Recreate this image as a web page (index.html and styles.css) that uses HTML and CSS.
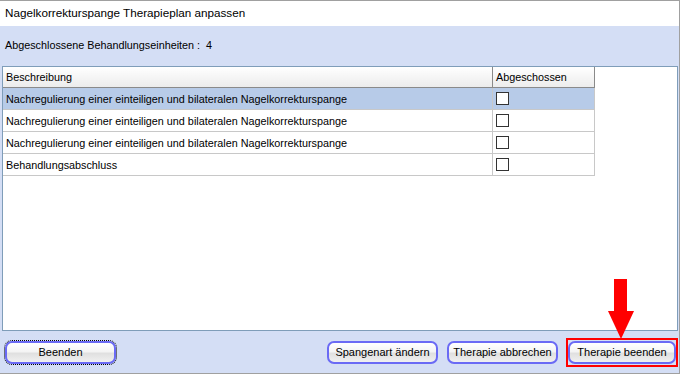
FILE: index.html
```html
<!DOCTYPE html>
<html lang="de">
<head>
  <meta charset="UTF-8" />
  <meta name="viewport" content="width=device-width, initial-scale=1.0" />
  <title>Nagelkorrekturspange Therapieplan anpassen</title>
  <link rel="stylesheet" href="styles.css">
</head>
<body>
  <div class="window">
    <div class="title">Nagelkorrekturspange Therapieplan anpassen</div>

    <div class="panel">
      <div class="summary">Abgeschlossene Behandlungseinheiten :&nbsp; 4</div>

      <div class="grid">
        <table>
          <thead>
            <tr>
              <th class="col-desc">Beschreibung</th>
              <th class="col-done">Abgeschossen</th>
            </tr>
          </thead>
          <tbody>
            <tr class="selected">
              <td>Nachregulierung einer einteiligen und bilateralen Nagelkorrekturspange</td>
              <td><span class="check"></span></td>
            </tr>
            <tr>
              <td>Nachregulierung einer einteiligen und bilateralen Nagelkorrekturspange</td>
              <td><span class="check"></span></td>
            </tr>
            <tr>
              <td>Nachregulierung einer einteiligen und bilateralen Nagelkorrekturspange</td>
              <td><span class="check"></span></td>
            </tr>
            <tr>
              <td>Behandlungsabschluss</td>
              <td><span class="check"></span></td>
            </tr>
          </tbody>
        </table>
      </div>

      <div class="footer">
        <button class="btn focused">Beenden</button>
        <div class="spacer"></div>
        <button class="btn">Spangenart ändern</button>
        <button class="btn">Therapie abbrechen</button>
        <span class="marked"><button class="btn">Therapie beenden</button></span>
      </div>
    </div>

    <svg class="arrow" width="28" height="62" viewBox="0 0 28 62">
      <rect x="7" y="0" width="13" height="33" fill="#ff0000" />
      <polygon points="1,32 27,32 14,60" fill="#ff0000" />
    </svg>
  </div>
</body>
</html>
```

FILE: styles.css
```css
:root {
  --panel: #d4def5;
  --frame: #a0a0a0;
  --grid-border: #7f9db9;
  --row-line: #c8c8c8;
  --selected: #b7cbe8;
  --btn-border: #6a6af5;
}

body {
  margin: 0;
  font-family: "Liberation Sans", Arial, sans-serif;
  font-size: 10.8px;
  color: #000;
  background: #fff;
}

.window {
  position: relative;
  width: 679px;
  height: 373px;
  border-top: 1px solid var(--frame);
  border-right: 1px solid var(--frame);
  display: flex;
  flex-direction: column;
}

.title {
  height: 25px;
  line-height: 24px;
  padding-left: 5px;
  font-size: 11.7px;
  background: #fff;
}

.panel {
  flex: 1;
  background: var(--panel);
  display: flex;
  flex-direction: column;
  border-bottom: 1px solid var(--frame);
}

.summary {
  height: 40px;
  line-height: 39px;
  padding-left: 5px;
}

.grid {
  height: 263px;
  margin: 0 1px 0 2px;
  border: 1px solid var(--grid-border);
  background: #fff;
}

table {
  border-collapse: collapse;
  table-layout: fixed;
  width: 592px;
}

th {
  height: 20px;
  font-weight: normal;
  text-align: left;
  padding: 0 0 0 3px;
  background: linear-gradient(#ffffff, #ececec);
  border-right: 1px solid #8a8a8a;
  border-bottom: 1px solid #8a8a8a;
}

.col-desc {
  width: 486px;
}

td {
  height: 21px;
  padding: 0 0 0 3px;
  border-right: 1px solid var(--row-line);
  border-bottom: 1px solid var(--row-line);
  white-space: nowrap;
}

tr.selected td {
  background: var(--selected);
}

.check {
  display: block;
  width: 11px;
  height: 11px;
  border: 1px solid #333;
  background: #fff;
}

.footer {
  flex: 1;
  display: flex;
  align-items: center;
  gap: 9px;
  padding: 0 1px 0 5px;
}

.spacer {
  flex: 1;
}

.btn {
  width: 111px;
  height: 23px;
  padding: 0;
  font-family: inherit;
  font-size: 11px;
  color: #000;
  border: 2px solid var(--btn-border);
  border-radius: 7px;
  background: linear-gradient(#ffffff 0%, #f4f4f4 45%, #e0e0e0 55%, #f0f0f0 100%);
}

.btn.focused {
  outline: 1px dotted #000;
  outline-offset: 0;
}

.marked {
  display: flex;
  padding: 1px 0;
  margin-left: -1px;
  border: 2px solid #ff0000;
}

.marked .btn {
  width: 108px;
}

.arrow {
  position: absolute;
  left: 607px;
  top: 278px;
}
```
